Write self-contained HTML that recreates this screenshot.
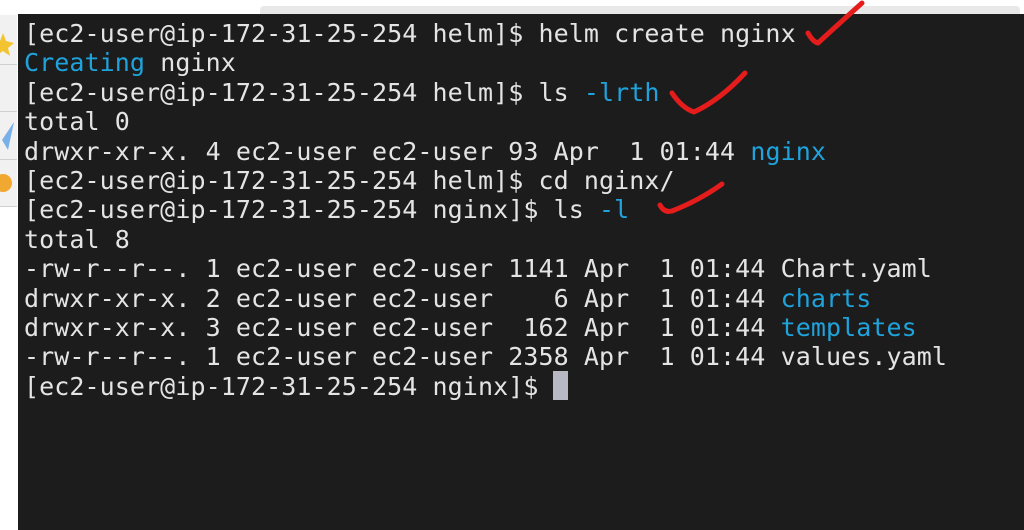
<!DOCTYPE html><html><head><style>
body{margin:0;width:1024px;height:530px;overflow:hidden;background:#fff;position:relative}
.top{position:absolute;left:260px;top:6px;width:760px;height:9px;background:#e8e8e8;border-radius:4px 4px 0 0}
.side{position:absolute;left:0;width:17px;background:#f1f1f1;border-bottom:1px solid #d0d0d0}
.term{position:absolute;left:18px;top:14px;right:0;bottom:0;background:#1c1c1c}
pre{position:absolute;left:24px;top:19px;margin:0;font:25px/29.4px "DejaVu Sans Mono","Liberation Mono",monospace;letter-spacing:0.08px;color:#e4e4e4}
.b{color:#1fa3dc}
.cur{position:absolute;left:553px;top:371px;width:15px;height:29px;background:#b8b8c4}
svg{position:absolute;left:0;top:0}
</style></head><body>
<div class="top"></div>
<div class="side" style="top:15px;height:49px"></div>
<div class="side" style="top:65px;height:46px"></div>
<div class="side" style="top:112px;height:47px"></div>
<div class="side" style="top:160px;height:46px"></div>
<div class="term"></div>
<pre>[ec2-user@ip-172-31-25-254 helm]$ helm create nginx
<span class="b">Creating</span> nginx
[ec2-user@ip-172-31-25-254 helm]$ ls <span class="b">-lrth</span>
total 0
drwxr-xr-x. 4 ec2-user ec2-user 93 Apr  1 01:44 <span class="b">nginx</span>
[ec2-user@ip-172-31-25-254 helm]$ cd nginx/
[ec2-user@ip-172-31-25-254 nginx]$ ls <span class="b">-l</span>
total 8
-rw-r--r--. 1 ec2-user ec2-user 1141 Apr  1 01:44 Chart.yaml
drwxr-xr-x. 2 ec2-user ec2-user    6 Apr  1 01:44 <span class="b">charts</span>
drwxr-xr-x. 3 ec2-user ec2-user  162 Apr  1 01:44 <span class="b">templates</span>
-rw-r--r--. 1 ec2-user ec2-user 2358 Apr  1 01:44 values.yaml
[ec2-user@ip-172-31-25-254 nginx]$ </pre>
<div class="cur"></div>
<svg width="1024" height="530" fill="none" stroke="#e41c1c" stroke-width="5" stroke-linecap="round" stroke-linejoin="round">
<path d="M808 33 Q813 42 818 43 Q832 30 862 3"/>
<path d="M672 93 Q682 108 694 112 Q720 100 745 73"/>
<path d="M660 205 Q664 213 672 211 Q700 200 722 184"/>
<polygon points="3,33 6,41 14,43 8,48 10,56 3,51 -4,56 -2,48 -8,43 0,41" fill="#f4c430" stroke="none"/>
<circle cx="3" cy="183" r="9" fill="#f0a830" stroke="none"/>
<path d="M14 122 L2 140 L8 150 Z" fill="#7ab0e8" stroke="none"/>
</svg>
</body></html>
